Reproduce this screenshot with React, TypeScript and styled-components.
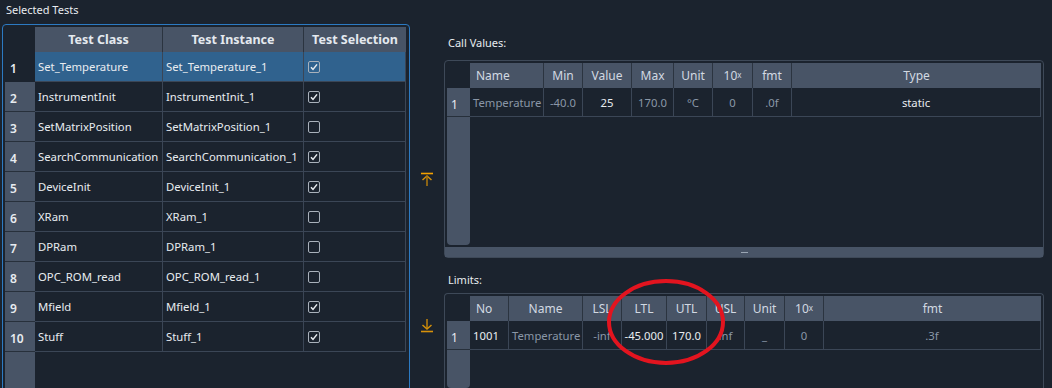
import React from "react";
import styled, { createGlobalStyle } from "styled-components";

const C = {
  bg: "#1b232e",
  grid: "#3b4656",
  head: "#485466",
  headDiv: "#2b3440",
  rowSep: "#27303b",
  sel: "#30628e",
  text: "#e8ecf0",
  dim: "#8a97a7",
  headText: "#d2d9e2",
  blue: "#2c7ac2",
  frame: "#3e4958",
};

const Global = createGlobalStyle`
  html, body { margin: 0; padding: 0; background: ${C.bg}; overflow: hidden; }
  body { font-family: "Noto Sans", "Open Sans", sans-serif; color: ${C.text}; }
  * { box-sizing: border-box; }
`;

const Page = styled.div`
  position: relative;
  display: flex;
  width: 1052px;
  height: 388px;
  overflow: hidden;
  background: ${C.bg};
`;

const LeftPane = styled.div`
  width: 410px;
  flex-shrink: 0;
  display: flex;
  flex-direction: column;
  overflow: hidden;
`;

const PaneTitle = styled.div`
  height: 24px;
  flex-shrink: 0;
  padding: 3px 0 0 6px;
  font-size: 11px;
  line-height: 14px;
  color: ${C.text};
`;

const GroupFrame = styled.div`
  margin-left: 2px;
  height: 380px;
  flex-shrink: 0;
  border: 1px solid ${C.blue};
  border-radius: 4px 4px 0 0;
  padding: 2px;
  display: flex;
  flex-direction: column;
`;

const Table = styled.div`
  flex: 1;
  display: flex;
  flex-direction: column;
  min-height: 0;
`;

const GridRow = styled.div<{ $cols: string; $h: number }>`
  display: grid;
  grid-template-columns: ${(p) => p.$cols};
  height: ${(p) => p.$h}px;
  flex-shrink: 0;
`;

const Corner = styled.div`
  background: transparent;
`;

const HeadCell = styled.div<{ $bold?: boolean; $align?: "left" | "center" }>`
  background: ${C.head};
  border-right: 1px solid ${C.headDiv};
  display: flex;
  align-items: center;
  justify-content: ${(p) => (p.$align === "left" ? "flex-start" : "center")};
  padding: 0 ${(p) => (p.$align === "left" ? "6px" : "2px")};
  font-size: ${(p) => (p.$bold ? "12.5px" : "12px")};
  font-weight: ${(p) => (p.$bold ? 700 : 400)};
  color: ${(p) => (p.$bold ? "#e4e9ef" : C.headText)};
  white-space: nowrap;
  overflow: hidden;
  &:last-child { border-right: none; }
`;

const Sup = styled.sup`
  font-size: 8px;
  vertical-align: top;
  position: relative;
  top: -1px;
`;

const RowHead = styled.div<{ $selected?: boolean; $bold?: boolean }>`
  background: ${(p) => (p.$selected ? "transparent" : C.head)};
  border-bottom: 1px solid ${(p) => (p.$selected ? "transparent" : C.rowSep)};
  display: flex;
  align-items: center;
  padding: 4px 0 0 ${(p) => (p.$bold ? "5px" : "4px")};
  font-size: 12px;
  font-weight: ${(p) => (p.$bold ? 600 : 400)};
  color: ${C.text};
`;

const Cell = styled.div<{
  $align?: "left" | "center";
  $dim?: boolean;
  $selected?: boolean;
}>`
  background: ${(p) => (p.$selected ? C.sel : "transparent")};
  border-right: 1px solid ${C.grid};
  border-bottom: 1px solid ${C.grid};
  display: flex;
  align-items: center;
  justify-content: ${(p) => (p.$align === "center" ? "center" : "flex-start")};
  padding: 0 ${(p) => (p.$align === "center" ? "1px" : "3px")};
  font-size: 11.3px;
  color: ${(p) => (p.$dim ? C.dim : C.text)};
  white-space: nowrap;
  overflow: hidden;
`;

const Filler = styled.div<{ $cols: string }>`
  flex: 1;
  display: grid;
  grid-template-columns: ${(p) => p.$cols};
`;

const FillerHead = styled.div<{ $rounded?: boolean }>`
  background: ${C.head};
  border-radius: ${(p) => (p.$rounded ? "0 0 4px 4px" : "0")};
`;

const CheckBox = styled.span`
  width: 12px;
  height: 12px;
  margin-left: 1px;
  border: 1px solid #a9b1bb;
  border-radius: 2px;
  display: inline-flex;
  align-items: center;
  justify-content: center;
`;

const ArrowColumn = styled.div`
  width: 34px;
  flex-shrink: 0;
  display: flex;
  flex-direction: column;
  align-items: center;
  padding-top: 172px;
  gap: 133px;
`;

const RightPane = styled.div`
  width: 600px;
  flex-shrink: 0;
  display: flex;
  flex-direction: column;
`;

const SectionLabel = styled.div<{ $top: number; $bottom: number }>`
  margin: ${(p) => p.$top}px 0 ${(p) => p.$bottom}px 4px;
  height: 16px;
  flex-shrink: 0;
  font-size: 11px;
  line-height: 16px;
  color: ${C.text};
`;

const TableFrame = styled.div<{ $h?: number }>`
  height: ${(p) => (p.$h ? `${p.$h}px` : "auto")};
  flex: ${(p) => (p.$h ? "0 0 auto" : "1")};
  border: 1px solid ${C.frame};
  border-bottom: ${(p) => (p.$h ? `1px solid ${C.frame}` : "none")};
  border-radius: ${(p) => (p.$h ? "4px" : "4px 4px 0 0")};
  padding: 2px 2px 0 2px;
  display: flex;
  flex-direction: column;
`;

const SplitBar = styled.div`
  height: 10px;
  flex-shrink: 0;
  margin: 2px -2px 0 -2px;
  background: ${C.head};
  display: flex;
  align-items: center;
  justify-content: center;
`;

const Grip = styled.span`
  width: 7px;
  height: 1px;
  background: #9aa6b4;
`;

const Overlay = styled.svg`
  position: absolute;
  left: 604px;
  top: 277px;
  pointer-events: none;
`;

type Col = { label: React.ReactNode; w: number; head?: "left" | "center"; align?: "left" | "center" };
type CellV = { v: string; dim?: boolean };

function Check() {
  return (
    <CheckBox>
      <svg width="10" height="10" viewBox="0 0 10 10">
        <polyline points="2,5.2 4,7.4 8,2.4" fill="none" stroke="#e8ecf0" strokeWidth="1.5" />
      </svg>
    </CheckBox>
  );
}

function DataTable({ cols, rows }: { cols: Col[]; rows: CellV[][] }) {
  const tmpl = "23px " + cols.map((c) => `${c.w}px`).join(" ");
  return (
    <Table>
      <GridRow $cols={tmpl} $h={25}>
        <Corner />
        {cols.map((c, i) => (
          <HeadCell key={i} $align={c.head}>
            {c.label}
          </HeadCell>
        ))}
      </GridRow>
      {rows.map((r, ri) => (
        <GridRow key={ri} $cols={tmpl} $h={29}>
          <RowHead>{ri + 1}</RowHead>
          {r.map((cell, ci) => (
            <Cell key={ci} $align={cols[ci].align} $dim={cell.dim}>
              {cell.v}
            </Cell>
          ))}
        </GridRow>
      ))}
      <Filler $cols={tmpl}>
        <FillerHead $rounded />
      </Filler>
    </Table>
  );
}

const tests: [string, boolean][] = [
  ["Set_Temperature", true],
  ["InstrumentInit", true],
  ["SetMatrixPosition", false],
  ["SearchCommunication", true],
  ["DeviceInit", true],
  ["XRam", false],
  ["DPRam", false],
  ["OPC_ROM_read", false],
  ["Mfield", true],
  ["Stuff", true],
];

const leftCols = "30px 128px 141px 102px";

const TenX = () => (
  <>
    10<Sup>x</Sup>
  </>
);

const callCols: Col[] = [
  { label: "Name", w: 74, head: "left", align: "left" },
  { label: "Min", w: 39, align: "center" },
  { label: "Value", w: 49, align: "center" },
  { label: "Max", w: 42, align: "center" },
  { label: "Unit", w: 39, align: "center" },
  { label: <TenX />, w: 40, align: "center" },
  { label: "fmt", w: 39, align: "center" },
  { label: "Type", w: 249, align: "center" },
];

const callRows: CellV[][] = [
  [
    { v: "Temperature", dim: true },
    { v: "-40.0", dim: true },
    { v: "25" },
    { v: "170.0", dim: true },
    { v: "°C", dim: true },
    { v: "0", dim: true },
    { v: ".0f", dim: true },
    { v: "static" },
  ],
];

const limitCols: Col[] = [
  { label: "No", w: 39, head: "left", align: "left" },
  { label: "Name", w: 74, align: "left" },
  { label: "LSL", w: 39, align: "center" },
  { label: "LTL", w: 45, align: "center" },
  { label: "UTL", w: 40, align: "center" },
  { label: "USL", w: 38, align: "center" },
  { label: "Unit", w: 40, align: "center" },
  { label: <TenX />, w: 39, align: "center" },
  { label: "fmt", w: 217, align: "center" },
];

const limitRows: CellV[][] = [
  [
    { v: "1001" },
    { v: "Temperature", dim: true },
    { v: "-inf", dim: true },
    { v: "-45.000" },
    { v: "170.0" },
    { v: "inf", dim: true },
    { v: "_", dim: true },
    { v: "0", dim: true },
    { v: ".3f", dim: true },
  ],
];

function ArrowToTop() {
  return (
    <svg width="14" height="14" viewBox="0 0 14 14">
      <line x1="1" y1="1.5" x2="13" y2="1.5" stroke="#f5a200" strokeWidth="1.6" />
      <polyline points="2.5,8 7,4 11.5,8" fill="none" stroke="#d28f0a" strokeWidth="1.5" />
      <line x1="7" y1="4" x2="7" y2="14" stroke="#a97510" strokeWidth="1.6" />
    </svg>
  );
}

function ArrowToBottom() {
  return (
    <svg width="14" height="14" viewBox="0 0 14 14">
      <line x1="7" y1="0" x2="7" y2="10" stroke="#b67d0e" strokeWidth="1.6" />
      <polyline points="2.5,6 7,10 11.5,6" fill="none" stroke="#d28f0a" strokeWidth="1.5" />
      <line x1="1" y1="12.5" x2="13" y2="12.5" stroke="#d8910a" strokeWidth="1.6" />
    </svg>
  );
}

export default function App() {
  return (
    <Page>
      <Global />
      <LeftPane>
        <PaneTitle>Selected Tests</PaneTitle>
        <GroupFrame>
          <Table>
            <GridRow $cols={leftCols} $h={25}>
              <Corner />
              <HeadCell $bold>Test Class</HeadCell>
              <HeadCell $bold>Test Instance</HeadCell>
              <HeadCell $bold>Test Selection</HeadCell>
            </GridRow>
            {tests.map(([name, on], i) => {
              const sel = i === 0;
              return (
                <GridRow key={name} $cols={leftCols} $h={30}>
                  <RowHead $bold $selected={sel}>
                    {i + 1}
                  </RowHead>
                  <Cell $selected={sel}>{name}</Cell>
                  <Cell $selected={sel}>{name}_1</Cell>
                  <Cell $selected={sel}>{on ? <Check /> : <CheckBox />}</Cell>
                </GridRow>
              );
            })}
            <Filler $cols={leftCols}>
              <FillerHead />
            </Filler>
          </Table>
        </GroupFrame>
      </LeftPane>

      <ArrowColumn>
        <ArrowToTop />
        <ArrowToBottom />
      </ArrowColumn>

      <RightPane>
        <SectionLabel $top={35} $bottom={9}>
          Call Values:
        </SectionLabel>
        <TableFrame $h={198}>
          <DataTable cols={callCols} rows={callRows} />
          <SplitBar>
            <Grip />
          </SplitBar>
        </TableFrame>
        <SectionLabel $top={14} $bottom={5}>
          Limits:
        </SectionLabel>
        <TableFrame>
          <DataTable cols={limitCols} rows={limitRows} />
        </TableFrame>
      </RightPane>

      <Overlay width="124" height="92" viewBox="0 0 124 92">
        <ellipse cx="62" cy="45" rx="57" ry="41" fill="none" stroke="#e3141f" strokeWidth="4" />
      </Overlay>
    </Page>
  );
}
